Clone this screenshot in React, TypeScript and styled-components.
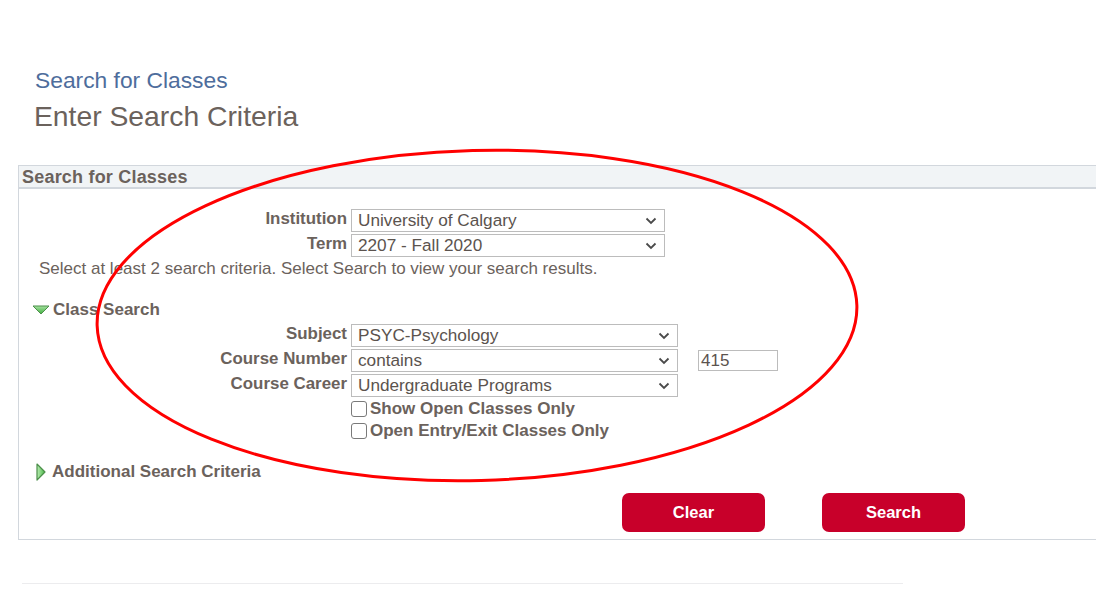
import styled, { createGlobalStyle } from 'styled-components'

const GlobalStyle = createGlobalStyle`
  html, body {
    margin: 0;
    padding: 0;
    background: #ffffff;
  }
  body {
    font-family: "Liberation Sans", Arial, sans-serif;
    color: #6b625c;
  }
`

const Page = styled.div`
  position: relative;
  width: 1096px;
  height: 592px;
  overflow: hidden;
  padding-top: 66px;
  box-sizing: border-box;
`

const TitleBlock = styled.div`
  padding-left: 34px;
  display: flex;
  flex-direction: column;
`

const Crumb = styled.div`
  font-size: 22.8px;
  line-height: 29px;
  color: #4e6d9c;
  padding-left: 1px;
`

const Heading = styled.h1`
  margin: 4px 0 0;
  font-size: 28.3px;
  line-height: 34px;
  font-weight: normal;
  color: #6b625c;
`

const Panel = styled.div`
  margin: 32px 0 0 18px;
  width: 1100px;
  border: 1px solid #d2d7dd;
  border-right: none;
  box-sizing: border-box;
  height: 375px;
  display: flex;
  flex-direction: column;
`

const PanelHeader = styled.div`
  background: #f1f4f6;
  border-bottom: 2px solid #d2d7dd;
  height: 21px;
  padding-left: 3px;
  font-weight: bold;
  font-size: 18px;
  letter-spacing: 0.2px;
  line-height: 22px;
  color: #6b625c;
`

const FormGrid = styled.div<{ $top: number }>`
  display: grid;
  grid-template-columns: 328px auto;
  column-gap: 4px;
  row-gap: 2px;
  margin-top: ${p => p.$top}px;
  justify-content: start;
  align-items: center;
`

const Label = styled.label`
  text-align: right;
  font-weight: bold;
  font-size: 16.9px;
  color: #6b625c;
  line-height: 20px;
  align-self: start;
`

const ControlRow = styled.div`
  display: flex;
  align-items: center;
  gap: 20px;
`

const SelectBox = styled.div<{ $width: number }>`
  width: ${p => p.$width}px;
  height: 23px;
  box-sizing: border-box;
  border: 1px solid #bcbcbc;
  display: flex;
  align-items: center;
  justify-content: space-between;
  padding: 0 7px 0 6px;
  font-size: 17.2px;
  color: #5b534e;
  background: #fff;
`

const TextInput = styled.div`
  width: 80px;
  height: 21px;
  box-sizing: border-box;
  border: 1px solid #bcbcbc;
  font-size: 17px;
  color: #5b534e;
  padding-left: 2px;
  line-height: 19px;
`

const Note = styled.div`
  margin: 2px 0 0 20px;
  font-size: 17px;
  line-height: 20px;
  color: #6b625c;
`

const SectionToggle = styled.div<{ $top: number; $left: number; $gap: number }>`
  display: flex;
  align-items: center;
  gap: ${p => p.$gap}px;
  margin: ${p => p.$top}px 0 0 ${p => p.$left}px;
  font-weight: bold;
  font-size: 17px;
  line-height: 20px;
  color: #6b625c;
`

const CheckRow = styled.div`
  display: flex;
  align-items: center;
  gap: 3px;
  font-weight: bold;
  font-size: 17px;
  line-height: 20px;
  color: #6b625c;
`

const Box = styled.span`
  width: 16px;
  height: 16px;
  box-sizing: border-box;
  border: 1px solid #7a7a7a;
  border-radius: 3px;
  display: inline-block;
`

const ButtonBar = styled.div`
  display: flex;
  gap: 57px;
  margin: 11px 0 0 603px;
`

const RedButton = styled.button`
  width: 143px;
  height: 39px;
  border: none;
  border-radius: 7px;
  background: #c8002a;
  color: #ffffff;
  font-family: "Liberation Sans", Arial, sans-serif;
  font-weight: bold;
  font-size: 16.5px;
  cursor: pointer;
`

const Footer = styled.div`
  margin: 43px 0 0 22px;
  width: 881px;
  border-top: 1px solid #ececee;
`

const Overlay = styled.svg`
  position: absolute;
  left: 0;
  top: 0;
  pointer-events: none;
`

const Chevron = () => (
  <svg width="12" height="8" viewBox="0 0 12 8">
    <path d="M1.5 1.5 L6 6 L10.5 1.5" fill="none" stroke="#4a4a4a" strokeWidth="1.8" />
  </svg>
)

const TriangleDown = () => (
  <svg width="18" height="12" viewBox="0 0 18 12">
    <defs>
      <linearGradient id="gd" x1="0" y1="0" x2="0" y2="1">
        <stop offset="0" stopColor="#a6e2a0" />
        <stop offset="1" stopColor="#3fae3f" />
      </linearGradient>
    </defs>
    <path d="M1 2 L17 2 L9 10 Z" fill="url(#gd)" stroke="#4c8f4a" strokeWidth="1" strokeLinejoin="round" />
  </svg>
)

const TriangleRight = () => (
  <svg width="12" height="18" viewBox="0 0 12 18">
    <defs>
      <linearGradient id="gr" x1="0" y1="0" x2="1" y2="0">
        <stop offset="0" stopColor="#b9ecb2" />
        <stop offset="1" stopColor="#49b847" />
      </linearGradient>
    </defs>
    <path d="M2 1 L10 9 L2 17 Z" fill="url(#gr)" stroke="#4c8f4a" strokeWidth="1.2" strokeLinejoin="round" />
  </svg>
)

const Select = ({ value, width }: { value: string; width: number }) => (
  <SelectBox $width={width}>
    <span>{value}</span>
    <Chevron />
  </SelectBox>
)

export default function App() {
  return (
    <>
      <GlobalStyle />
      <Page>
        <TitleBlock>
          <Crumb>Search for Classes</Crumb>
          <Heading>Enter Search Criteria</Heading>
        </TitleBlock>

        <Panel>
          <PanelHeader>Search for Classes</PanelHeader>

          <FormGrid $top={20}>
            <Label>Institution</Label>
            <Select value="University of Calgary" width={314} />
            <Label>Term</Label>
            <Select value="2207 - Fall 2020" width={314} />
          </FormGrid>

          <Note>Select at least 2 search criteria. Select Search to view your search results.</Note>

          <SectionToggle $top={21} $left={13} $gap={3}>
            <TriangleDown />
            Class Search
          </SectionToggle>

          <FormGrid $top={4}>
            <Label>Subject</Label>
            <Select value="PSYC-Psychology" width={327} />
            <Label>Course Number</Label>
            <ControlRow>
              <Select value="contains" width={327} />
              <TextInput>415</TextInput>
            </ControlRow>
            <Label>Course Career</Label>
            <Select value="Undergraduate Programs" width={327} />
            <span />
            <CheckRow>
              <Box />
              Show Open Classes Only
            </CheckRow>
            <span />
            <CheckRow>
              <Box />
              Open Entry/Exit Classes Only
            </CheckRow>
          </FormGrid>

          <SectionToggle $top={21} $left={16} $gap={5}>
            <TriangleRight />
            Additional Search Criteria
          </SectionToggle>

          <ButtonBar>
            <RedButton>Clear</RedButton>
            <RedButton>Search</RedButton>
          </ButtonBar>
        </Panel>

        <Footer />

        <Overlay width="1096" height="592" viewBox="0 0 1096 592">
          <ellipse
            cx="477"
            cy="315.5"
            rx="380"
            ry="165"
            fill="none"
            stroke="#ff0000"
            strokeWidth="3"
            transform="rotate(-1.5 477 315.5)"
          />
        </Overlay>
      </Page>
    </>
  )
}
